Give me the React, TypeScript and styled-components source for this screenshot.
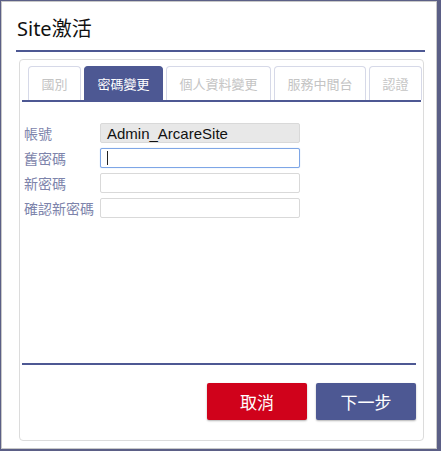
import React from 'react';
import styled, { createGlobalStyle } from 'styled-components';

const navy = '#4d5893';

const GlobalStyle = createGlobalStyle`
  html, body {
    margin: 0;
    padding: 0;
    background: #5b5f86;
    font-family: "Noto Sans", "Noto Sans CJK TC", sans-serif;
  }
`;

const Modal = styled.div`
  box-sizing: border-box;
  width: 436px;
  height: 448px;
  margin: 1px 0 0 1px;
  background: #fff;
  border: 1px solid #c8c8c8;
  padding: 0 11px 7px 14px;
  display: flex;
  flex-direction: column;
`;

const Title = styled.h1`
  margin: 0;
  height: 50px;
  flex: none;
  padding-left: 1px;
  box-sizing: border-box;
  padding-top: 13px;
  font-size: 20px;
  line-height: 28px;
  font-weight: 400;
  color: #111;
  border-bottom: 2px solid ${navy};
`;

const Card = styled.div`
  flex: 1;
  margin: 7px 1px 0 3px;
  border: 1px solid #dcdcdc;
  border-radius: 4px;
  padding: 6px 2px 0;
  display: flex;
  flex-direction: column;
`;

const TabBar = styled.div`
  display: flex;
  gap: 3px;
  padding-left: 6px;
  border-bottom: 2px solid ${navy};
`;

const Tab = styled.div<{ $active?: boolean }>`
  flex: none;
  height: 34px;
  box-sizing: border-box;
  padding: 0 12.5px;
  display: flex;
  align-items: center;
  white-space: nowrap;
  font-size: 13px;
  font-family: "Noto Sans CJK TC", sans-serif;
  color: ${(p) => (p.$active ? '#fff' : '#c4c4c4')};
  background: ${(p) => (p.$active ? navy : '#fff')};
  border: 1px solid ${(p) => (p.$active ? navy : '#d6d9e8')};
  border-bottom: none;
  border-radius: 4px 4px 0 0;
`;

const Form = styled.div`
  flex: 1;
  display: flex;
  flex-direction: column;
  gap: 5px;
  padding: 21px 0 0 2px;
`;

const Row = styled.div`
  display: flex;
  align-items: center;
  height: 20px;
`;

const Label = styled.div`
  width: 76px;
  font-size: 14px;
  font-family: "Noto Sans CJK TC", sans-serif;
  color: #7d84ab;
  white-space: nowrap;
`;

const Input = styled.div<{ $disabled?: boolean; $focused?: boolean }>`
  box-sizing: border-box;
  width: 200px;
  height: 20px;
  border: 1px solid ${(p) => (p.$focused ? '#7ea6e6' : '#d9d9d9')};
  box-shadow: ${(p) => (p.$focused ? '0 0 1px #9bbcf0' : 'none')};
  background: ${(p) => (p.$disabled ? '#e8e8e8' : '#fff')};
  border-radius: 2px;
  padding-left: 6px;
  display: flex;
  align-items: center;
  font-family: "Liberation Sans", Arial, sans-serif;
  font-size: 15px;
  color: #111;
`;

const Caret = styled.span`
  width: 1px;
  height: 14px;
  background: #222;
`;

const Footer = styled.div`
  box-sizing: border-box;
  flex: none;
  margin: 0 5px 0 0;
  border-top: 2px solid ${navy};
  height: 77px;
  display: flex;
  justify-content: flex-end;
  align-items: flex-start;
  gap: 9px;
  padding: 18px 0 0;
`;

const Button = styled.button<{ $variant: 'cancel' | 'next' }>`
  width: 100px;
  height: 37px;
  border: none;
  border-radius: 2px;
  background: ${(p) => (p.$variant === 'cancel' ? '#d0021b' : navy)};
  color: #fff;
  font-size: 17px;
  font-family: "Noto Sans CJK TC", sans-serif;
  box-shadow: 0 1px 2px rgba(0, 0, 0, 0.3);
  cursor: pointer;
`;

const tabs = ['國別', '密碼變更', '個人資料變更', '服務中間台', '認證'];

export default function App() {
  return (
    <>
      <GlobalStyle />
      <Modal>
        <Title>Site激活</Title>
        <Card>
          <TabBar>
            {tabs.map((t) => (
              <Tab key={t} $active={t === '密碼變更'}>{t}</Tab>
            ))}
          </TabBar>
          <Form>
            <Row>
              <Label>帳號</Label>
              <Input $disabled>Admin_ArcareSite</Input>
            </Row>
            <Row>
              <Label>舊密碼</Label>
              <Input $focused><Caret /></Input>
            </Row>
            <Row>
              <Label>新密碼</Label>
              <Input />
            </Row>
            <Row>
              <Label>確認新密碼</Label>
              <Input />
            </Row>
          </Form>
          <Footer>
            <Button $variant="cancel">取消</Button>
            <Button $variant="next">下一步</Button>
          </Footer>
        </Card>
      </Modal>
    </>
  );
}
